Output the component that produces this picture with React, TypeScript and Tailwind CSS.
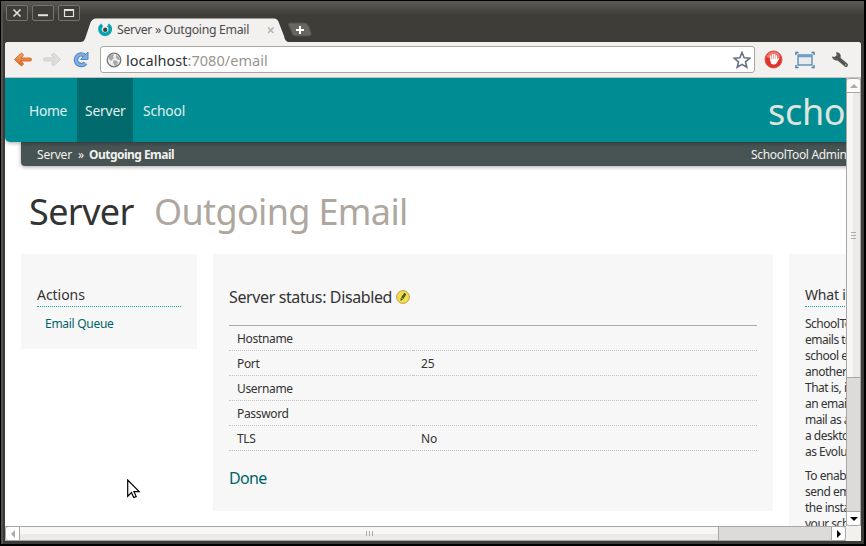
import React from "react";

const rows = [
  ["Hostname", ""],
  ["Port", "25"],
  ["Username", ""],
  ["Password", ""],
  ["TLS", "No"],
];

const helpOne = ["SchoolTool can send", "emails to users of the", "school even from", "another server.", "That is, it is not", "an email server or", "mail as a client or", "a desktop app such", "as Evolution."];
const helpTwo = ["To enable it and", "send emails from", "the installation of", "your school"];

function WindowButton({ children }: { children: React.ReactNode }) {
  return (
    <div className="h-4 w-[22px] shrink-0 rounded-[2px] border border-[#77746d] bg-[#403e39]">
      <svg className="block" width="20" height="14" viewBox="0 0 20 14" fill="none" stroke="#e6e3dc" strokeWidth="1.6">{children}</svg>
    </div>
  );
}

function TitleBar() {
  return (
    <div className="relative flex h-[42px] shrink-0 items-start gap-1 border-t border-[#101010] bg-linear-to-b from-[#5c5a54] via-[#3e3d38] via-35% to-[#3c3b37] pl-1.5 pt-1">
      <WindowButton><path d="M6.500 3.500l7 7m0-7l-7 7" /></WindowButton>
      <WindowButton><path d="M5 9.200h10" strokeWidth="2" /></WindowButton>
      <WindowButton><path d="M5.500 3.500h9v7h-9z" strokeWidth="1.200" /><path d="M5 4h10" strokeWidth="2" /></WindowButton>
      <svg className="absolute left-[81px] top-[17px]" width="236" height="25" viewBox="0 0 236 25">
        <path d="M0 24C3 24 4 21 5 18L9 6C10.500 2 12 .5 16 .5H192C196 .5 197 2 198 5L203 18C204 22 205 24 209 24V25H0Z" fill="#f2f1f0" />
        <path d="M208 5h15q4 0 5 4l2 6q1 3-3 3h-12q-3 0-4-3l-3-7q-1-3 0-3z" fill="#68665f" stroke="#53514b" />
        <path d="M215 12h8m-4-4v8" stroke="#fff" strokeWidth="2" />
        <path d="M187 9.500l5.500 5.500m0-5.500l-5.500 5.500" stroke="#b5b3b0" strokeWidth="1.500" />
        <path d="M21.200 6.900A5.200 5.200 0 1 0 27 6.900" fill="none" stroke="#08a4ae" strokeWidth="3.600" />
        <circle cx="24.200" cy="11.700" r="2.200" fill="#3d4548" />
      </svg>
      <span className="absolute left-[117px] top-[20px] whitespace-nowrap text-[12.300px] leading-[18px] tracking-[-0.32px] text-[#4b4b4b]">Server » Outgoing Email</span>
    </div>
  );
}

function Toolbar() {
  return (
    <div className="flex h-9 shrink-0 items-center rounded-t-[3px] border-b border-[#c5c3c0] bg-[#f2f1f0] pl-2">
      <svg className="shrink-0" width="82" height="20" viewBox="0 0 82 20">
        <defs>
          <linearGradient id="orange" x2="0" y2="1"><stop stopColor="#f5aa70" /><stop offset="1" stopColor="#dc601a" /></linearGradient>
        </defs>
        <path d="M8.500 3L1.500 9.500l7 6.500 2-2-2.500-3h9q1.500 0 1.500-1.500T17 8H8l2.500-3z" fill="url(#orange)" stroke="#d56b2a" strokeLinejoin="round" />
        <path d="M40.500 3l7 6.500-7 6.500-2-2 2.500-3h-9q-1.500 0-1.500-1.500T32 8h9l-2.500-3z" fill="#deddda" stroke="#d0cfcc" strokeLinejoin="round" />
        <path d="M71.500 5.500A5.300 5.300 0 1 0 72.500 13" fill="none" stroke="#5089c6" strokeWidth="4.600" />
        <path d="M75 2v7.500h-7.500z" fill="#80aee0" stroke="#5089c6" strokeLinejoin="round" />
        <path d="M71.500 5.500A5.300 5.300 0 1 0 72.500 13" fill="none" stroke="#80aee0" strokeWidth="2.600" />
      </svg>
      <div className="ml-[5px] flex h-[27px] w-[655px] shrink-0 items-center rounded-[3px] border border-[#aaa7a3] bg-white pl-[5px] pr-[3px]">
        <svg width="16" height="16" viewBox="0 0 16 16">
          <circle cx="8" cy="8" r="6.800" fill="#eee" stroke="#777" strokeWidth="1.300" />
          <path d="M3 4l3-2 2 1-1 2 1 1-2 2-1 1-2-2zM10 3l3 2 1 3-2 0-2-2zM8 8l3 1 1 2-2 3-2-1-1-3z" fill="#a8a8a8" />
        </svg>
        <span className="ml-1 flex-1 whitespace-nowrap text-[14.500px] leading-5 tracking-[0.03px] text-[#333]">localhost<span className="text-[#99948e]">:7080/email</span></span>
        <svg width="18" height="18" viewBox="0 0 18 18"><path d="M9 1.500l2.200 5.200 5.600.5-4.300 3.600 1.300 5.500L9 13.400l-4.800 2.900 1.300-5.500L1.200 7.200l5.600-.5z" fill="#fff" stroke="#667083" strokeWidth="1.600" /></svg>
      </div>
      <div className="ml-[9px] flex shrink-0 items-center">
        <svg width="19" height="19" viewBox="0 0 19 19">
          <circle cx="9.500" cy="9.500" r="8.500" fill="#e33228" stroke="#d8574f" />
          <path d="M2.500 7a7.300 7.300 0 0 1 14 0q-7 4-14 0z" fill="#f0776c" />
          <path d="M6.700 10V6M8.700 9V4.500M10.700 9V4.500M12.500 10V6" stroke="#fff" strokeWidth="1.300" strokeLinecap="round" />
          <path d="M6 9h7l1.800-1.200.6.700-3.200 5.200Q9 15.500 7 13.500z" fill="#fff" />
        </svg>
        <svg className="ml-3" width="20" height="18" viewBox="0 0 20 18" fill="none" stroke="#467fac" strokeWidth="1.200">
          <path d="M1 4V1.500h2.500M16.500 1.500H19V4M1 14v2.500h2.500M16.500 16.500H19V14" strokeWidth="1.400" />
          <rect x="3" y="4" width="14" height="10" fill="#e8eaec" /><path d="M3 5h14" strokeWidth="2.500" stroke="#6e9fc6" />
        </svg>
        <svg className="ml-4" width="18" height="18" viewBox="0 0 18 18">
          <path d="M6 6.500L15 14" stroke="#555" strokeWidth="4" strokeLinecap="round" />
          <path d="M.8 5.500l3.400.4 1.600-1.700L5 1.200Q8.500 1 9.600 4q.8 5.300-3.600 5.600Q2 9.500.8 5.500z" fill="#555" />
          <circle cx="14.800" cy="13.800" r=".9" fill="#aaa" />
        </svg>
      </div>
    </div>
  );
}

function SiteHeader() {
  return (
    <div className="w-[980px]">
      <div className="relative z-10 flex h-16 rounded-bl-[5px] bg-[#008c93] pl-4 text-[13.800px] leading-[66px] tracking-[-0.15px] text-[#e2f1ef] shadow-[0_1px_4px_rgba(0,0,0,0.35)]">
        <span className="w-14 shrink-0 pl-2 tracking-[-0.3px]">Home</span>
        <span className="w-14 shrink-0 bg-[#006a6c] pl-2">Server</span>
        <span className="w-[632px] shrink-0 pl-[10px]">School</span>
        <span className="pl-[3px] text-[36px] leading-[67px] tracking-[-0.3px] text-[#dce4dd]">schooltool</span>
      </div>
      <div className="ml-4 flex h-6 rounded-bl-[4px] bg-[#485353] pl-4 text-[12px] leading-[25px] text-[#f1f1ee] shadow-[0_1px_4px_rgba(0,0,0,0.35)]">
        <span className="w-[52px] shrink-0 tracking-[-0.2px]">Server<span className="pl-[6px]">»</span></span>
        <b className="w-[662px] shrink-0 tracking-[-0.53px]">Outgoing Email</b>
        <span className="whitespace-nowrap tracking-[-0.32px]">SchoolTool Administrator</span>
      </div>
    </div>
  );
}

function MainPage() {
  return (
    <div className="h-[448px] w-[841px] shrink-0 overflow-hidden bg-white text-[12px] text-[#333]">
      <SiteHeader />
      <h1 className="flex h-[88px] pl-6 pt-[19px] text-[36px] leading-[54px] whitespace-nowrap">
        <span className="w-[125px] tracking-[-0.6px]">Server</span>
        <span className="tracking-[-0.65px] text-[#aea79f]">Outgoing Email</span>
      </h1>
      <div className="flex w-[980px] items-start gap-4 pl-4">
        <aside className="h-[95px] w-44 bg-[#f7f7f7] px-4 pt-[31px]">
          <h2 className="h-[22px] border-b border-dotted border-[#0aa4ad] text-[14px] leading-5 tracking-[-0.05px]">Actions</h2>
          <a className="block pl-2 pt-[7px] leading-5 tracking-[-0.28px] text-[#006466]">Email Queue</a>
        </aside>
        <main className="h-[257px] w-[560px] bg-[#f7f7f7] px-4 pt-[31px]">
          <div className="flex h-10 items-start text-[16px] leading-6 tracking-[-0.38px]">
            <span className="w-[167px] whitespace-nowrap">Server status: Disabled</span>
            <svg className="mt-[5px]" width="14" height="14" viewBox="0 0 14 14">
              <circle cx="7" cy="7" r="6.400" fill="#eee04b" stroke="#c99a48" /><path d="M9.300 3.500L6.200 8.300" stroke="#51552b" strokeWidth="2.600" /><path d="M4.800 8l2 1.500-2.300 1.500z" fill="#3d401f" />
            </svg>
          </div>
          <div className="border-t border-[#aea79f]">
            {rows.map(([label, value]) => (
              <div className="flex h-[25px] leading-[26px] tracking-[-0.33px]" key={label}>
                <span className="w-[184px] border-b border-dotted border-[#c5c5c5] pl-2">{label}</span>
                <span className="flex-1 border-b border-dotted border-[#c5c5c5] pl-2 tracking-normal">{value}</span>
              </div>
            ))}
          </div>
          <a className="block pt-[15px] text-[16px] leading-6 tracking-[-0.65px] text-[#006466]">Done</a>
        </main>
        <aside className="h-[300px] w-44 bg-[#f7f7f7] px-4 pt-[31px]">
          <h2 className="h-[22px] border-b border-dotted border-[#0aa4ad] text-[14px] leading-5 tracking-[-0.2px] whitespace-nowrap">What is this?</h2>
          <div className="pt-[9px] leading-4 tracking-[-0.5px] whitespace-nowrap">
            {helpOne.map((line) => <div key={line}>{line}</div>)}
            <div className="pt-2">{helpTwo.map((line) => <div key={line}>{line}</div>)}</div>
          </div>
        </aside>
      </div>
    </div>
  );
}

function VerticalScroll() {
  return (
    <div className="flex h-[448px] w-[15px] flex-col border-x border-[#a9a7a5] bg-[#dcdbda]">
      <div className="flex h-[15px] items-center justify-center rounded-t-[3px] border-y border-[#a9a7a5] bg-[#fafaf9]"><svg width="8" height="4"><path d="M0 4L4 0l4 4z" fill="#aaa" /></svg></div>
      <div className="flex h-[285px] flex-col items-center justify-center gap-[2px] border-b border-[#a9a7a5] bg-linear-to-r from-[#f8f7f5] from-50% to-[#ebeae8] to-50%">
        <i className="h-px w-[5px] bg-[#aaa]" /><i className="h-px w-[5px] bg-[#aaa]" /><i className="h-px w-[5px] bg-[#aaa]" />
      </div>
      <div className="flex-1" />
      <div className="flex h-[15px] items-center justify-center rounded-b-[3px] border-y border-[#a9a7a5] bg-white"><svg width="8" height="4"><path d="M0 0h8L4 4z" fill="#000" /></svg></div>
    </div>
  );
}

function HorizontalScroll() {
  return (
    <div className="flex h-[15px] w-[841px] border-y border-[#a9a7a5] bg-[#dcdbda]">
      <div className="flex w-[15px] items-center justify-center rounded-l-[3px] border-x border-[#a9a7a5] bg-white"><svg width="4" height="8"><path d="M4 0v8L0 4z" fill="#aaa" /></svg></div>
      <div className="flex w-[699px] items-center justify-center gap-[2px] border-r border-[#a9a7a5] bg-linear-to-b from-[#f8f7f5] from-50% to-[#ebeae8] to-50%">
        <i className="h-[5px] w-px bg-[#aaa]" /><i className="h-[5px] w-px bg-[#aaa]" /><i className="h-[5px] w-px bg-[#aaa]" />
      </div>
      <div className="flex-1" />
      <div className="flex w-[15px] items-center justify-center rounded-r-[3px] border-x border-[#a9a7a5] bg-white"><svg width="4" height="8"><path d="M0 0v8l4-4z" fill="#000" /></svg></div>
    </div>
  );
}

export default function App() {
  return (
    <div className="relative h-[546px] w-[866px] overflow-hidden bg-[#3c3b37] font-['Noto_Sans',sans-serif]">
      <TitleBar />
      <div className="ml-[5px] w-[856px] rounded-t-[3px] bg-[#f2f1f0]">
        <Toolbar />
        <div className="flex"><MainPage /><VerticalScroll /></div>
        <HorizontalScroll />
      </div>
      <div className="pointer-events-none absolute inset-0 border border-b-2 border-r-2 border-black" />
      <div className="pointer-events-none absolute bottom-0.5 left-px right-0.5 top-px rounded-t-[4px] border-l-2 border-[#55534e]" />
      <svg className="absolute left-[127px] top-[479px]" width="14" height="21" viewBox="0 0 14 21"><path d="M.7 1v16.300l3.800-3.700 2.200 5 2.500-1-2.200-4.900h5.200z" fill="#fff" stroke="#000" strokeWidth="1.200" /></svg>
    </div>
  );
}
